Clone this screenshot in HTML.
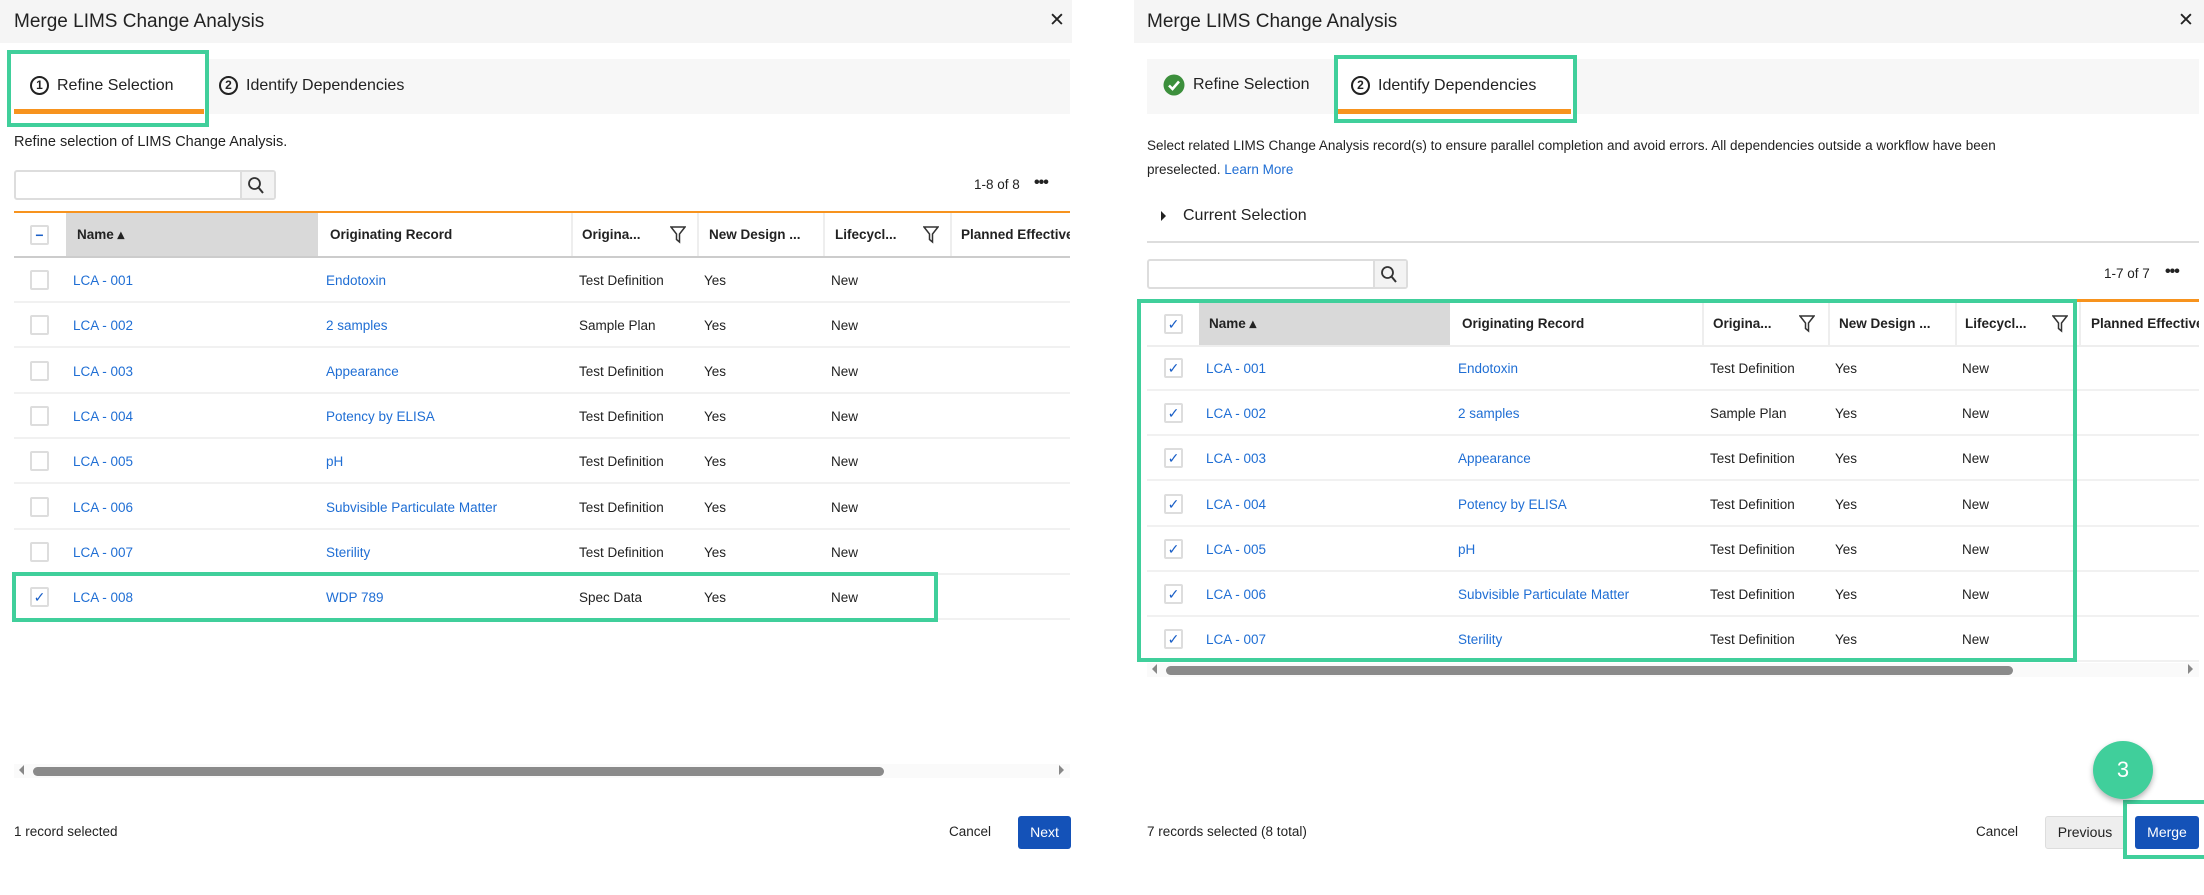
<!DOCTYPE html>
<html><head><meta charset="utf-8"><style>
*{margin:0;padding:0;box-sizing:border-box}
body{width:2204px;height:895px;background:#fff;position:relative;overflow:hidden;font-family:"Liberation Sans",Arial,sans-serif;color:#222}
.a{position:absolute;white-space:nowrap}
.hdr{background:#f5f5f5;height:43px;top:0}
.title{font-size:19px;top:11px;color:#222}
.x{font-size:19px;top:9px}
.strip{background:#f7f7f7;top:59px;height:55px}
.tab{font-size:16px;top:76px}
.circ{display:inline-block;width:19px;height:19px;border:2px solid #222;border-radius:50%;font-size:12px;font-weight:bold;text-align:center;line-height:15px;vertical-align:1px;margin-right:8px}
.orange{background:#f7931e;height:5px}
.green{border:4px solid #40cf9b}
.desc{font-size:14.5px}
.search{border:2px solid #ddd;border-radius:3px;background:#fff}
.sbtn{background:#f3f3f3;border-left:2px solid #ddd}
.hrow{font-size:13.5px;font-weight:bold;line-height:43px;height:43px}
.vb{width:2px;background:#eee;height:43px}
.row{height:45px;border-bottom:2px solid #f1f1f1;font-size:13.5px;line-height:45px}
.row .a,.hrow .a{top:0}
.cb{width:19px;height:20px;border:2px solid #ddd;border-radius:2px;background:#fff;top:12px!important;color:#1a5fc7;font-size:14px;line-height:16px;text-align:center;font-weight:normal}
.lk{color:#1f6ed4}
.track{background:#fafafa;height:14px}
.thumb{background:#8a8a8a;height:9px;border-radius:5px}
.btn{border-radius:3px;font-size:14px;text-align:center;line-height:33px;height:33px}
</style></head><body>

<!-- LEFT PANEL -->
<div class="a hdr" style="left:0;width:1072px"></div>
<div class="a title" style="left:14px">Merge LIMS Change Analysis</div>
<div class="a x" style="left:1049px">✕</div>
<div class="a strip" style="left:14px;width:1056px"></div>
<div class="a" style="left:11px;top:54px;width:194px;height:69px;background:#fff"></div>
<div class="a tab" style="left:30px"><span class="circ">1</span>Refine Selection</div>
<div class="a tab" style="left:219px"><span class="circ">2</span>Identify Dependencies</div>
<div class="a orange" style="left:14px;top:109px;width:190px"></div>
<div class="a green" style="left:7px;top:50px;width:202px;height:77px"></div>
<div class="a desc" style="left:14px;top:134px">Refine selection of LIMS Change Analysis.</div>
<div class="a search" style="left:14px;top:170px;width:262px;height:30px"></div>
<div class="a sbtn" style="left:240px;top:172px;width:34px;height:26px"></div>
<svg class="a" style="left:247px;top:176px" width="18" height="19" viewBox="0 0 18 19"><circle cx="7.5" cy="7.5" r="5.5" fill="none" stroke="#333" stroke-width="1.8"/><path d="M11.5 11.5 L16 17" stroke="#333" stroke-width="2"/></svg>
<div class="a" style="left:974px;top:177px;font-size:13.5px">1-8 of 8</div>
<div class="a" style="left:1034px;top:174px;font-size:16px;font-weight:bold;letter-spacing:-1px">•••</div>
<div class="a" style="left:14px;top:211px;width:1056px;height:2px;background:#f7931e"></div>
<div class="a hrow" style="left:14px;top:213px;width:1056px;border-bottom:2px solid #ccc;height:45px">
 <div class="a" style="left:52px;width:252px;height:43px;background:#d9d9d9"></div>
 <div class="a cb" style="left:16px;color:#1a5fc7;font-weight:bold">−</div>
 <div class="a" style="left:63px">Name ▴</div>
 <div class="a" style="left:316px">Originating Record</div>
 <div class="a vb" style="left:557px"></div>
 <div class="a" style="left:568px">Origina...</div>
 <svg class="a" style="left:656px;top:13px" width="16" height="18" viewBox="0 0 16 18"><path d="M1 1 H15 L9.5 8 V16 L6.5 13.5 V8 Z" fill="none" stroke="#333" stroke-width="1.5"/></svg>
 <div class="a vb" style="left:683px"></div>
 <div class="a" style="left:695px">New Design ...</div>
 <div class="a vb" style="left:809px"></div>
 <div class="a" style="left:821px">Lifecycl...</div>
 <svg class="a" style="left:909px;top:13px" width="16" height="18" viewBox="0 0 16 18"><path d="M1 1 H15 L9.5 8 V16 L6.5 13.5 V8 Z" fill="none" stroke="#333" stroke-width="1.5"/></svg>
 <div class="a vb" style="left:936px"></div>
 <div class="a" style="left:947px;width:109px;overflow:hidden">Planned Effective</div>
</div>

<div class="a row" style="left:14px;top:258px;width:1056px"><div class="a cb" style="left:16px"></div><div class="a lk" style="left:59px">LCA - 001</div><div class="a lk" style="left:312px">Endotoxin</div><div class="a" style="left:565px">Test Definition</div><div class="a" style="left:690px">Yes</div><div class="a" style="left:817px">New</div></div>
<div class="a row" style="left:14px;top:303px;width:1056px"><div class="a cb" style="left:16px"></div><div class="a lk" style="left:59px">LCA - 002</div><div class="a lk" style="left:312px">2 samples</div><div class="a" style="left:565px">Sample Plan</div><div class="a" style="left:690px">Yes</div><div class="a" style="left:817px">New</div></div>
<div class="a row" style="left:14px;top:349px;width:1056px"><div class="a cb" style="left:16px"></div><div class="a lk" style="left:59px">LCA - 003</div><div class="a lk" style="left:312px">Appearance</div><div class="a" style="left:565px">Test Definition</div><div class="a" style="left:690px">Yes</div><div class="a" style="left:817px">New</div></div>
<div class="a row" style="left:14px;top:394px;width:1056px"><div class="a cb" style="left:16px"></div><div class="a lk" style="left:59px">LCA - 004</div><div class="a lk" style="left:312px">Potency by ELISA</div><div class="a" style="left:565px">Test Definition</div><div class="a" style="left:690px">Yes</div><div class="a" style="left:817px">New</div></div>
<div class="a row" style="left:14px;top:439px;width:1056px"><div class="a cb" style="left:16px"></div><div class="a lk" style="left:59px">LCA - 005</div><div class="a lk" style="left:312px">pH</div><div class="a" style="left:565px">Test Definition</div><div class="a" style="left:690px">Yes</div><div class="a" style="left:817px">New</div></div>
<div class="a row" style="left:14px;top:485px;width:1056px"><div class="a cb" style="left:16px"></div><div class="a lk" style="left:59px">LCA - 006</div><div class="a lk" style="left:312px">Subvisible Particulate Matter</div><div class="a" style="left:565px">Test Definition</div><div class="a" style="left:690px">Yes</div><div class="a" style="left:817px">New</div></div>
<div class="a row" style="left:14px;top:530px;width:1056px"><div class="a cb" style="left:16px"></div><div class="a lk" style="left:59px">LCA - 007</div><div class="a lk" style="left:312px">Sterility</div><div class="a" style="left:565px">Test Definition</div><div class="a" style="left:690px">Yes</div><div class="a" style="left:817px">New</div></div>
<div class="a row" style="left:14px;top:575px;width:1056px"><div class="a cb" style="left:16px">✓</div><div class="a lk" style="left:59px">LCA - 008</div><div class="a lk" style="left:312px">WDP 789</div><div class="a" style="left:565px">Spec Data</div><div class="a" style="left:690px">Yes</div><div class="a" style="left:817px">New</div></div>
<div class="a green" style="left:12px;top:572px;width:926px;height:50px"></div>

<div class="a track" style="left:14px;top:764px;width:1056px"></div>
<div class="a thumb" style="left:33px;top:767px;width:851px"></div>
<div class="a" style="left:19px;top:765px;width:0;height:0;border-top:5px solid transparent;border-bottom:5px solid transparent;border-right:5px solid #888"></div>
<div class="a" style="left:1059px;top:765px;width:0;height:0;border-top:5px solid transparent;border-bottom:5px solid transparent;border-left:5px solid #888"></div>
<div class="a" style="left:14px;top:824px;font-size:13.5px">1 record selected</div>
<div class="a" style="left:949px;top:824px;font-size:13.5px">Cancel</div>
<div class="a btn" style="left:1018px;top:816px;width:53px;background:#1452b8;color:#fff">Next</div>

<!-- RIGHT PANEL -->
<div class="a hdr" style="left:1134px;width:1070px"></div>
<div class="a title" style="left:1147px">Merge LIMS Change Analysis</div>
<div class="a x" style="left:2178px">✕</div>
<div class="a strip" style="left:1147px;width:1052px"></div>
<div class="a" style="left:1338px;top:59px;width:236px;height:60px;background:#fff"></div>
<svg class="a" style="left:1163px;top:74px" width="22" height="22" viewBox="0 0 22 22"><circle cx="11" cy="11" r="10.5" fill="#3c8f3c"/><path d="M6 11.5 L9.5 15 L16 7.5" fill="none" stroke="#fff" stroke-width="2.6"/></svg>
<div class="a tab" style="left:1193px">Refine Selection</div>
<div class="a tab" style="left:1351px"><span class="circ">2</span>Identify Dependencies</div>
<div class="a orange" style="left:1336px;top:109px;width:235px"></div>
<div class="a green" style="left:1334px;top:55px;width:243px;height:68px"></div>
<div class="a" style="left:1147px;top:134px;font-size:13.5px;line-height:24px">Select related LIMS Change Analysis record(s) to ensure parallel completion and avoid errors. All dependencies outside a workflow have been<br>preselected. <span class="lk">Learn More</span></div>
<div class="a" style="left:1161px;top:211px;width:0;height:0;border-top:5px solid transparent;border-bottom:5px solid transparent;border-left:5px solid #222"></div>
<div class="a" style="left:1183px;top:207px;font-size:16px">Current Selection</div>
<div class="a" style="left:1147px;top:241px;width:1052px;height:2px;background:#ddd"></div>
<div class="a search" style="left:1147px;top:259px;width:261px;height:30px"></div>
<div class="a sbtn" style="left:1373px;top:261px;width:33px;height:26px"></div>
<svg class="a" style="left:1380px;top:265px" width="18" height="19" viewBox="0 0 18 19"><circle cx="7.5" cy="7.5" r="5.5" fill="none" stroke="#333" stroke-width="1.8"/><path d="M11.5 11.5 L16 17" stroke="#333" stroke-width="2"/></svg>
<div class="a" style="left:2104px;top:266px;font-size:13.5px">1-7 of 7</div>
<div class="a" style="left:2165px;top:263px;font-size:16px;font-weight:bold;letter-spacing:-1px">•••</div>
<div class="a" style="left:1147px;top:299px;width:1052px;height:3px;background:#f7931e"></div>
<div class="a hrow" style="left:1147px;top:302px;width:1052px;border-bottom:2px solid #eee;height:45px">
 <div class="a" style="left:52px;width:251px;height:43px;background:#d9d9d9"></div>
 <div class="a cb" style="left:17px">✓</div>
 <div class="a" style="left:62px">Name ▴</div>
 <div class="a" style="left:315px">Originating Record</div>
 <div class="a vb" style="left:555px"></div>
 <div class="a" style="left:566px">Origina...</div>
 <svg class="a" style="left:652px;top:13px" width="16" height="18" viewBox="0 0 16 18"><path d="M1 1 H15 L9.5 8 V16 L6.5 13.5 V8 Z" fill="none" stroke="#333" stroke-width="1.5"/></svg>
 <div class="a vb" style="left:681px"></div>
 <div class="a" style="left:692px">New Design ...</div>
 <div class="a vb" style="left:808px"></div>
 <div class="a" style="left:818px">Lifecycl...</div>
 <svg class="a" style="left:905px;top:13px" width="16" height="18" viewBox="0 0 16 18"><path d="M1 1 H15 L9.5 8 V16 L6.5 13.5 V8 Z" fill="none" stroke="#333" stroke-width="1.5"/></svg>
 <div class="a vb" style="left:932px"></div>
 <div class="a" style="left:944px;width:108px;overflow:hidden">Planned Effective</div>
</div>

<div class="a row" style="left:1147px;top:346px;width:1052px"><div class="a cb" style="left:17px">✓</div><div class="a lk" style="left:59px">LCA - 001</div><div class="a lk" style="left:311px">Endotoxin</div><div class="a" style="left:563px">Test Definition</div><div class="a" style="left:688px">Yes</div><div class="a" style="left:815px">New</div></div>
<div class="a row" style="left:1147px;top:391px;width:1052px"><div class="a cb" style="left:17px">✓</div><div class="a lk" style="left:59px">LCA - 002</div><div class="a lk" style="left:311px">2 samples</div><div class="a" style="left:563px">Sample Plan</div><div class="a" style="left:688px">Yes</div><div class="a" style="left:815px">New</div></div>
<div class="a row" style="left:1147px;top:436px;width:1052px"><div class="a cb" style="left:17px">✓</div><div class="a lk" style="left:59px">LCA - 003</div><div class="a lk" style="left:311px">Appearance</div><div class="a" style="left:563px">Test Definition</div><div class="a" style="left:688px">Yes</div><div class="a" style="left:815px">New</div></div>
<div class="a row" style="left:1147px;top:482px;width:1052px"><div class="a cb" style="left:17px">✓</div><div class="a lk" style="left:59px">LCA - 004</div><div class="a lk" style="left:311px">Potency by ELISA</div><div class="a" style="left:563px">Test Definition</div><div class="a" style="left:688px">Yes</div><div class="a" style="left:815px">New</div></div>
<div class="a row" style="left:1147px;top:527px;width:1052px"><div class="a cb" style="left:17px">✓</div><div class="a lk" style="left:59px">LCA - 005</div><div class="a lk" style="left:311px">pH</div><div class="a" style="left:563px">Test Definition</div><div class="a" style="left:688px">Yes</div><div class="a" style="left:815px">New</div></div>
<div class="a row" style="left:1147px;top:572px;width:1052px"><div class="a cb" style="left:17px">✓</div><div class="a lk" style="left:59px">LCA - 006</div><div class="a lk" style="left:311px">Subvisible Particulate Matter</div><div class="a" style="left:563px">Test Definition</div><div class="a" style="left:688px">Yes</div><div class="a" style="left:815px">New</div></div>
<div class="a row" style="left:1147px;top:617px;width:1052px"><div class="a cb" style="left:17px">✓</div><div class="a lk" style="left:59px">LCA - 007</div><div class="a lk" style="left:311px">Sterility</div><div class="a" style="left:563px">Test Definition</div><div class="a" style="left:688px">Yes</div><div class="a" style="left:815px">New</div></div>
<div class="a green" style="left:1137px;top:299px;width:940px;height:363px"></div>

<div class="a track" style="left:1147px;top:663px;width:1052px"></div>
<div class="a thumb" style="left:1166px;top:666px;width:847px"></div>
<div class="a" style="left:1152px;top:664px;width:0;height:0;border-top:5px solid transparent;border-bottom:5px solid transparent;border-right:5px solid #888"></div>
<div class="a" style="left:2188px;top:664px;width:0;height:0;border-top:5px solid transparent;border-bottom:5px solid transparent;border-left:5px solid #888"></div>
<div class="a" style="left:1147px;top:824px;font-size:13.5px">7 records selected (8 total)</div>
<div class="a" style="left:1976px;top:824px;font-size:13.5px">Cancel</div>
<div class="a btn" style="left:2045px;top:816px;width:80px;background:#eee;border:1px solid #ddd;color:#222;line-height:31px">Previous</div>
<div class="a btn" style="left:2135px;top:816px;width:64px;background:#1452b8;color:#fff">Merge</div>
<div class="a green" style="left:2123px;top:800px;width:88px;height:59px"></div>
<div class="a" style="left:2093px;top:741px;width:60px;height:58px;border-radius:50%;background:#40cf9b;box-shadow:0 3px 6px rgba(0,0,0,.3);color:#fff;font-size:22px;text-align:center;line-height:58px">3</div>
</body></html>
